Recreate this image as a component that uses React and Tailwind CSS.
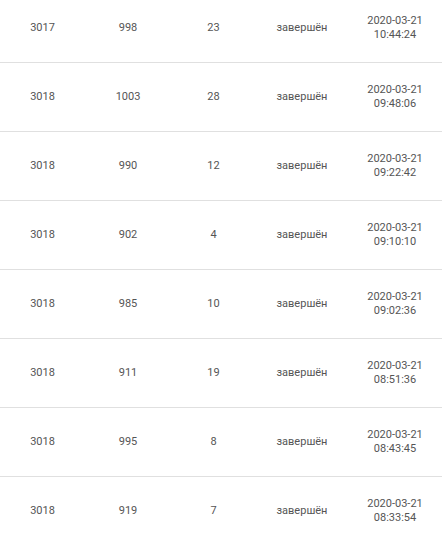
import React from "react";

const rows = [
  ["3017", "998", "23", "завершён", "2020-03-21", "10:44:24"],
  ["3018", "1003", "28", "завершён", "2020-03-21", "09:48:06"],
  ["3018", "990", "12", "завершён", "2020-03-21", "09:22:42"],
  ["3018", "902", "4", "завершён", "2020-03-21", "09:10:10"],
  ["3018", "985", "10", "завершён", "2020-03-21", "09:02:36"],
  ["3018", "911", "19", "завершён", "2020-03-21", "08:51:36"],
  ["3018", "995", "8", "завершён", "2020-03-21", "08:43:45"],
  ["3018", "919", "7", "завершён", "2020-03-21", "08:33:54"],
];

export default function App() {
  return (
    <div className="w-[442px] h-[537px] overflow-hidden bg-white" style={{ fontFamily: "Roboto, 'Liberation Sans', sans-serif" }}>
      <div className="-mt-[6px]">
        {rows.map((r, i) => (
          <div
            key={i}
            className="grid grid-cols-[85px_86px_85px_92px_94px] h-[69px] items-center border-b border-[#e0e0e0] text-[11px] leading-[14.5px] text-[#555]"
          >
            <div className="text-center">{r[0]}</div>
            <div className="text-center">{r[1]}</div>
            <div className="text-center">{r[2]}</div>
            <div className="text-center">{r[3]}</div>
            <div className="text-center">
              <div>{r[4]}</div>
              <div>{r[5]}</div>
            </div>
          </div>
        ))}
      </div>
    </div>
  );
}
